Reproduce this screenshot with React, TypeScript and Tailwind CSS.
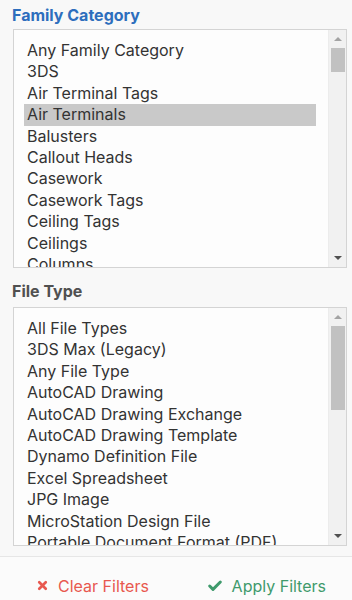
import { X, Check } from "lucide-react";

const familyCategories = [
  "Any Family Category",
  "3DS",
  "Air Terminal Tags",
  "Air Terminals",
  "Balusters",
  "Callout Heads",
  "Casework",
  "Casework Tags",
  "Ceiling Tags",
  "Ceilings",
  "Columns",
];

const fileTypes = [
  "All File Types",
  "3DS Max (Legacy)",
  "Any File Type",
  "AutoCAD Drawing",
  "AutoCAD Drawing Exchange",
  "AutoCAD Drawing Template",
  "Dynamo Definition File",
  "Excel Spreadsheet",
  "JPG Image",
  "MicroStation Design File",
  "Portable Document Format (PDF)",
];

function ListBox({
  items,
  selected,
  thumbClass,
}: {
  items: string[];
  selected?: string;
  thumbClass: string;
}) {
  return (
    <div className="ml-[13px] mr-[5px] h-[239px] border border-[#d4d4d4] bg-[#fdfdfd] flex overflow-hidden">
      <ul className="flex-1 pl-[10px] pr-[12px] pt-[10px] overflow-hidden">
        {items.map((item) => (
          <li
            key={item}
            className={`h-[21.4px] leading-[21.4px] pl-[3px] text-[16px] text-[#333] whitespace-nowrap ${
              item === selected ? "bg-[#c9c9c9]" : ""
            }`}
          >
            {item}
          </li>
        ))}
      </ul>
      <div className="w-[18px] bg-[#f1f1f1] border-l border-[#ececec] flex flex-col items-center">
        <div className="h-[18px] flex items-center justify-center">
          <div className="w-0 h-0 border-l-[4px] border-r-[4px] border-b-[4px] border-l-transparent border-r-transparent border-b-[#a3a3a3]" />
        </div>
        <div className={`w-[14px] bg-[#c1c1c1] ${thumbClass}`} />
        <div className="flex-1" />
        <div className="h-[18px] flex items-center justify-center">
          <div className="w-0 h-0 border-l-[4px] border-r-[4px] border-t-[4px] border-l-transparent border-r-transparent border-t-[#505050]" />
        </div>
      </div>
    </div>
  );
}

export default function App() {
  return (
    <div
      className="w-[352px] h-[600px] bg-[#f8f8f8] flex flex-col"
      style={{ fontFamily: "Inter, 'Open Sans', sans-serif" }}
    >
      <h3 className="pl-[12px] pt-[3px] h-[29px] text-[16px] font-bold text-[#2d6ebd]">
        Family Category
      </h3>
      <ListBox items={familyCategories} selected="Air Terminals" thumbClass="h-[24px]" />

      <h3 className="pl-[12px] pt-[11px] h-[39px] text-[16px] font-bold text-[#505050]">
        File Type
      </h3>
      <ListBox items={fileTypes} thumbClass="h-[84px]" />

      <div className="mt-[10px] border-t border-[#e6e6e6] flex-1 bg-[#fbfbfb] flex items-center justify-between pl-[36px] pr-[26px] pt-[14px]">
        <button className="flex items-center gap-[9px] text-[16px] text-[#e8584f]">
          <X size={13} strokeWidth={5} />
          Clear Filters
        </button>
        <button className="flex items-center gap-[9px] text-[16px] text-[#3f9a6c]">
          <Check size={16} strokeWidth={4.5} />
          Apply Filters
        </button>
      </div>
    </div>
  );
}
